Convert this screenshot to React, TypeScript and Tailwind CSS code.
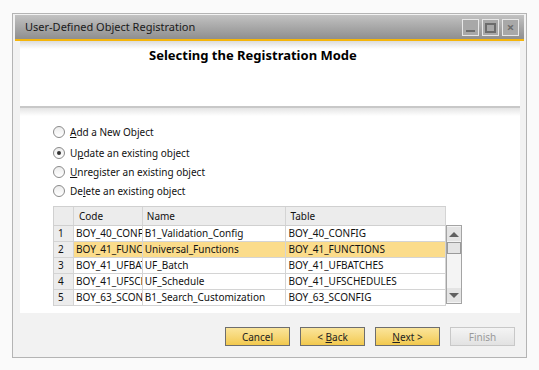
import React from 'react';

type Row = { n: number; code: string; name: string; table: string };

const rows: Row[] = [
  { n: 1, code: 'BOY_40_CONFIG', name: 'B1_Validation_Config', table: 'BOY_40_CONFIG' },
  { n: 2, code: 'BOY_41_FUNCTIONS', name: 'Universal_Functions', table: 'BOY_41_FUNCTIONS' },
  { n: 3, code: 'BOY_41_UFBATCHES', name: 'UF_Batch', table: 'BOY_41_UFBATCHES' },
  { n: 4, code: 'BOY_41_UFSCHEDULES', name: 'UF_Schedule', table: 'BOY_41_UFSCHEDULES' },
  { n: 5, code: 'BOY_63_SCONFIG', name: 'B1_Search_Customization', table: 'BOY_63_SCONFIG' },
];

const font = { fontFamily: '"Noto Sans", "Open Sans", sans-serif' };

const Radio = ({ checked, pre, u, post }: { checked?: boolean; pre: string; u: string; post: string }) => (
  <div className="flex items-center h-[19px]">
    <span className="w-[12px] h-[12px] rounded-full border border-[#8a8a8a] bg-gradient-to-b from-[#ececec] to-white flex items-center justify-center">
      {checked && <span className="w-[4px] h-[4px] rounded-full bg-[#333]" />}
    </span>
    <span className="ml-[5px] text-[10px] text-[#111] leading-none">
      {pre}
      <span className="underline">{u}</span>
      {post}
    </span>
  </div>
);

const Btn = ({ children, disabled }: { children: React.ReactNode; disabled?: boolean }) => (
  <button
    className={
      disabled
        ? 'w-[65px] h-[19px] border border-[#c8c8c8] bg-gradient-to-b from-[#f4f4f4] to-[#e2e2e2] text-[10px] text-[#9a9a9a] leading-none'
        : 'w-[65px] h-[19px] border border-[#6e6e6e] bg-gradient-to-b from-[#fbe59a] to-[#f2c94c] text-[10px] text-[#222] leading-none'
    }
  >
    {children}
  </button>
);

export default function App() {
  return (
    <div className="w-[539px] h-[370px] bg-[#fafafa] pt-[13px] pl-[12px]" style={font}>
      <div className="w-[515px] h-[345px] border border-[#b4b4b4] bg-[#f2f2f2] px-[2px] pt-[1px] pb-[2px] flex flex-col">
        {/* title bar */}
        <div className="h-[24px] bg-gradient-to-b from-[#c2c2c2] to-[#8f8f8f] flex items-center pl-[10px] pr-[5px]">
          <span className="text-[11px] text-[#1a1a1a] flex-1">User-Defined Object Registration</span>
          <div className="flex gap-[3px] mt-[1px]">
            <span className="w-[17px] h-[17px] border border-[#e8e8e8] bg-[#a8a8a8] flex items-end justify-center pb-[3px]">
              <span className="w-[9px] h-[2px] bg-[#6c6c6c]" />
            </span>
            <span className="w-[17px] h-[17px] border border-[#e8e8e8] bg-[#a8a8a8] flex items-center justify-center">
              <span className="w-[11px] h-[10px] border-2 border-[#6c6c6c]" />
            </span>
            <span className="w-[17px] h-[17px] border border-[#e8e8e8] bg-[#a8a8a8] flex items-center justify-center text-[#6c6c6c] text-[13px] font-bold leading-none">
              ×
            </span>
          </div>
        </div>
        <div className="h-[2px] bg-[#f5b50a]" />
        {/* body */}
        <div className="flex-1 flex flex-col pl-[5px] pr-[4px]">
          <div className="h-[67px] bg-white bg-gradient-to-b from-[#dcdcdc] to-white bg-[length:100%_8px] bg-no-repeat border-b-2 border-[#c8c8c8]">
            <div className="pl-[129px] pt-[5px] text-[13px] font-bold text-black">Selecting the Registration Mode</div>
          </div>
          <div className="h-[205px] bg-white bg-gradient-to-b from-[#e4e4e4] to-white bg-[length:100%_8px] bg-no-repeat pl-[33px] pt-[14px]">
            <div className="flex flex-col">
              <div className="mb-[2px]">
                <Radio pre="" u="A" post="dd a New Object" />
              </div>
              <Radio checked pre="U" u="p" post="date an existing object" />
              <Radio pre="" u="U" post="nregister an existing object" />
              <Radio pre="De" u="l" post="ete an existing object" />
            </div>
            <div className="mt-[6px] flex text-[10px] text-[#111]">
              <div className="w-[393px] border-l border-t border-[#d0d0d0]">
                <div className="flex h-[19px] bg-[#ececec] border-b border-[#d0d0d0]">
                  <div className="w-[20px] border-r border-[#d4d4d4]" />
                  <div className="w-[69px] border-r border-[#d4d4d4] pl-[5px] flex items-center">Code</div>
                  <div className="w-[144px] border-r border-[#d4d4d4] pl-[4px] flex items-center">Name</div>
                  <div className="w-[160px] border-r border-[#d4d4d4] pl-[4px] flex items-center">Table</div>
                </div>
                {rows.map((r) => {
                  const sel = r.n === 2;
                  const cell = sel ? 'bg-[#fbdc8b]' : 'bg-white';
                  return (
                    <div key={r.n} className="flex h-[16px] border-b border-[#d4d4d4]">
                      <div className="w-[20px] border-r border-[#d4d4d4] bg-[#ececec] pl-[4px] flex items-center">{r.n}</div>
                      <div className={`w-[69px] border-r border-[#d4d4d4] pl-[2px] flex items-center overflow-hidden whitespace-nowrap ${cell}`}>{r.code}</div>
                      <div className={`w-[144px] border-r border-[#d4d4d4] pl-[2px] flex items-center overflow-hidden whitespace-nowrap ${cell}`}>{r.name}</div>
                      <div className={`w-[160px] border-r border-[#d4d4d4] pl-[2px] flex items-center overflow-hidden whitespace-nowrap ${cell}`}>{r.table}</div>
                    </div>
                  );
                })}
              </div>
              <div className="mt-[19px] w-[16px] h-[79px] border border-[#a4a4a4] bg-[#f4f4f4] flex flex-col items-center py-[1px]">
                <div className="w-[14px] h-[14px] bg-[#e4e4e4] flex items-center justify-center">
                  <span className="w-0 h-0 border-l-[5px] border-r-[5px] border-b-[5px] border-l-transparent border-r-transparent border-b-[#606060]" />
                </div>
                <div className="w-[14px] h-[12px] border border-[#9a9a9a] bg-[#e4e4e4] mt-[1px]" />
                <div className="flex-1" />
                <div className="w-[14px] h-[14px] bg-[#e4e4e4] flex items-center justify-center">
                  <span className="w-0 h-0 border-l-[5px] border-r-[5px] border-t-[5px] border-l-transparent border-r-transparent border-t-[#606060]" />
                </div>
              </div>
            </div>
          </div>
          <div className="flex-1 flex justify-end items-start gap-[10px] pt-[14px] pr-[5px]">
            <Btn>Cancel</Btn>
            <Btn>
              &lt; <span className="underline">B</span>ack
            </Btn>
            <Btn>
              <span className="underline">N</span>ext &gt;
            </Btn>
            <Btn disabled>Finish</Btn>
          </div>
        </div>
      </div>
    </div>
  );
}
